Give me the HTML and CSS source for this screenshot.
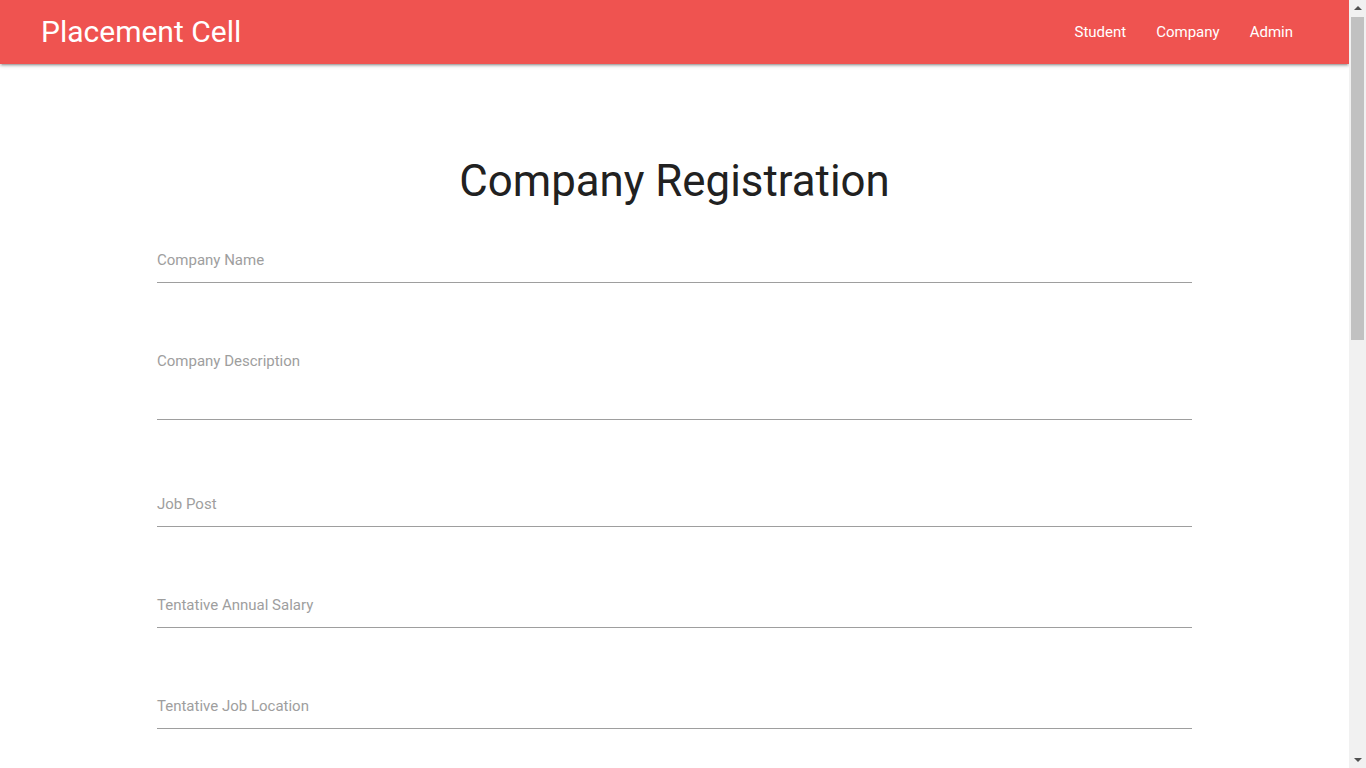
FILE: index.html
```html
<!DOCTYPE html>
<html lang="en">
<head>
<meta charset="utf-8">
<title>Placement Cell - Company Registration</title>
<link rel="stylesheet" href="styles.css">
</head>
<body>
<div class="page">
  <nav class="topnav">
    <a class="brand" href="#">Placement Cell</a>
    <ul class="links">
      <li><a href="#">Student</a></li>
      <li><a href="#">Company</a></li>
      <li><a href="#">Admin</a></li>
    </ul>
  </nav>
  <main class="container">
    <h3 class="title">Company Registration</h3>
    <form class="form">
      <div class="field"><label class="label">Company Name</label><div class="line"></div></div>
      <div class="field field-area"><label class="label">Company Description</label><div class="line line-area"></div></div>
      <div class="field"><label class="label">Job Post</label><div class="line"></div></div>
      <div class="field"><label class="label">Tentative Annual Salary</label><div class="line"></div></div>
      <div class="field"><label class="label">Tentative Job Location</label><div class="line"></div></div>
      <div class="field"><label class="label">Eligibility Criteria</label><div class="line"></div></div>
      <div class="field"><label class="label">Contact Person</label><div class="line"></div></div>
      <div class="field"><label class="label">Email</label><div class="line"></div></div>
      <div class="field"><label class="label">Password</label><div class="line"></div></div>
      <div class="actions"><button type="button" class="btn">Register</button></div>
    </form>
  </main>
</div>
<div class="scrollbar" aria-hidden="true">
  <div class="arrow arrow-up"></div>
  <div class="track"><div class="thumb"></div></div>
  <div class="arrow arrow-down"></div>
</div>
</body>
</html>
```
FILE: styles.css
```css
html, body {
  margin: 0;
  padding: 0;
}
html {
  overflow: hidden;
}
body {
  font-family: Roboto, "Liberation Sans", sans-serif;
  color: rgba(0,0,0,0.87);
  background: #fff;
}
.page {
  margin-right: 17px;
}
.topnav {
  height: 64px;
  background: #ef5350;
  display: flex;
  align-items: center;
  justify-content: space-between;
  padding: 0 41px;
  box-shadow: 0 2px 2px 0 rgba(0,0,0,0.14), 0 3px 1px -2px rgba(0,0,0,0.12), 0 1px 5px 0 rgba(0,0,0,0.2);
  position: relative;
  z-index: 2;
}
.brand {
  color: #fff;
  text-decoration: none;
  font-size: 30px;
  line-height: 64px;
}
.links {
  list-style: none;
  margin: 0;
  padding: 0;
  display: flex;
}
.links a {
  display: block;
  color: #fff;
  text-decoration: none;
  font-size: 15px;
  line-height: 64px;
  padding: 0 15px;
}
.container {
  width: 1035px;
  margin: 0 auto;
  padding-bottom: 120px;
}
.title {
  margin: 0;
  padding-top: 88px;
  text-align: center;
  font-weight: 400;
  font-size: 43.8px;
  line-height: 58px;
  color: #212121;
}
.form {
  padding-top: 40px;
}
.field {
  margin-bottom: 68px;
}
.field-area {
  margin-bottom: 74px;
}
.label {
  display: block;
  font-size: 15px;
  line-height: 20px;
  color: #9e9e9e;
}
.line {
  height: 12px;
  border-bottom: 1px solid #9e9e9e;
}
.line-area {
  height: 48px;
}
.actions {
  padding-top: 10px;
}
.btn {
  font-family: inherit;
  border: none;
  background: #ef5350;
  color: #fff;
  height: 36px;
  padding: 0 16px;
  font-size: 15px;
  text-transform: uppercase;
  border-radius: 2px;
}
.scrollbar {
  position: fixed;
  top: 0;
  right: 0;
  width: 17px;
  height: 100vh;
  background: #f1f1f1;
  display: flex;
  flex-direction: column;
  z-index: 10;
}
.arrow {
  height: 17px;
  flex: none;
  position: relative;
}
.arrow::after {
  content: "";
  position: absolute;
  left: 5px;
  width: 0;
  height: 0;
  border-left: 4px solid transparent;
  border-right: 4px solid transparent;
}
.arrow-up::after {
  top: 6px;
  border-bottom: 4px solid #505050;
}
.arrow-down::after {
  top: 7px;
  border-top: 4px solid #505050;
}
.track {
  flex: 1;
}
.thumb {
  margin: 0 2px;
  height: 323px;
  background: #c1c1c1;
}
```
